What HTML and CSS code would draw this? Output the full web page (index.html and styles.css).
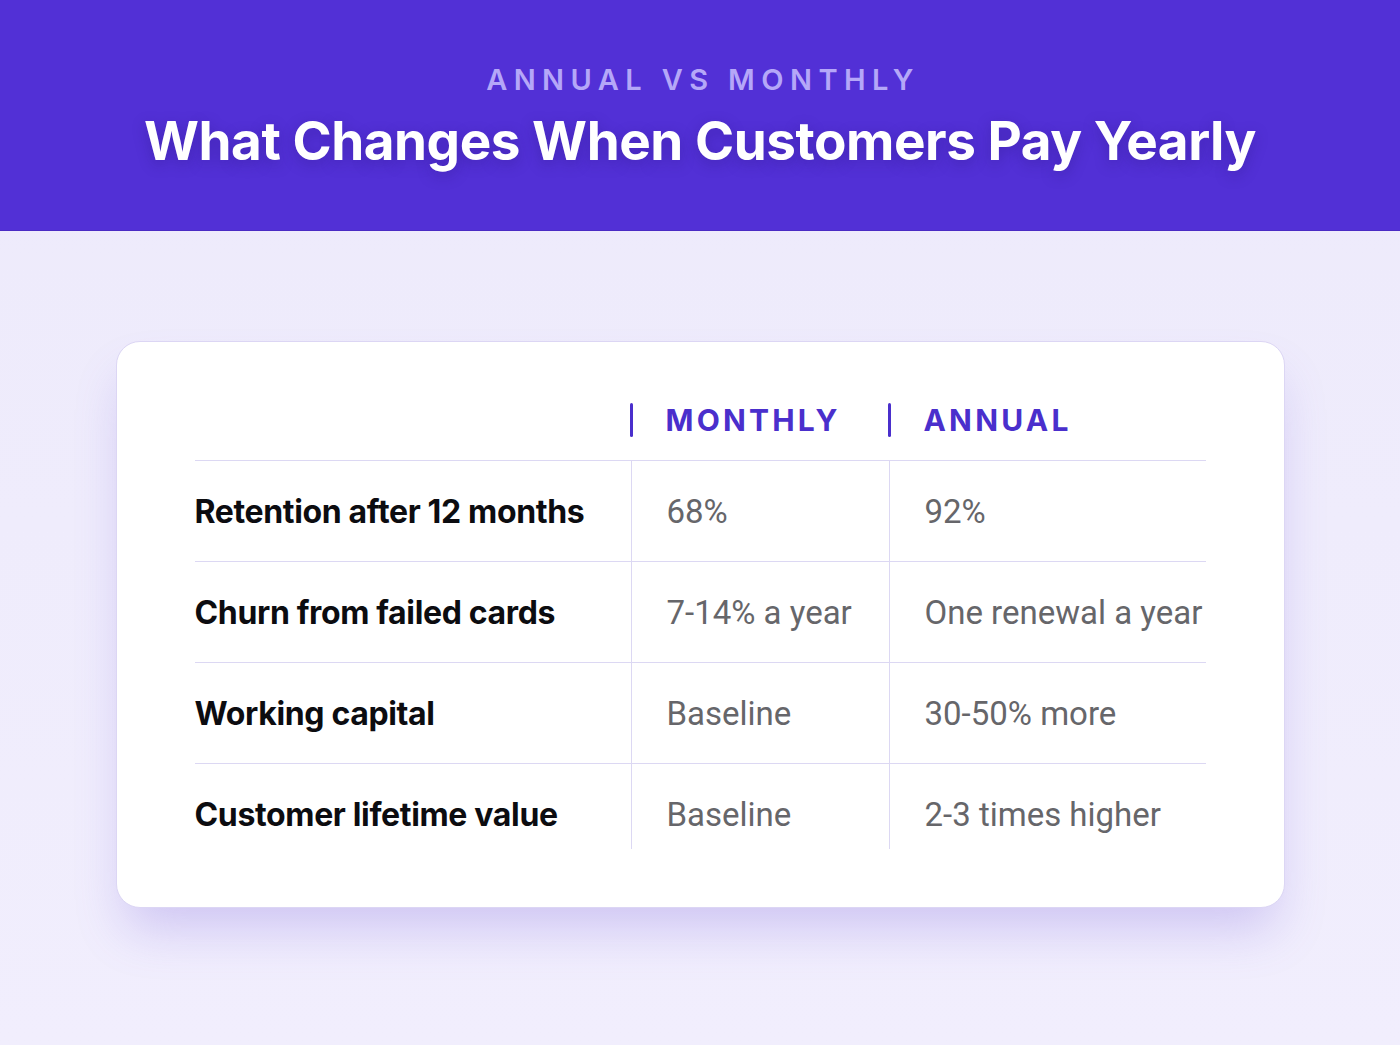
FILE: index.html
```html
<!DOCTYPE html>
<html lang="en">
<head>
<meta charset="utf-8">
<title>Annual vs Monthly</title>
<link rel="stylesheet" href="styles.css">
</head>
<body>
<header class="hero">
  <div class="eyebrow">ANNUAL VS MONTHLY</div>
  <h1 class="title">What Changes When Customers Pay Yearly</h1>
</header>
<main class="stage">
  <section class="card">
    <div class="table">
      <div class="row head">
        <div class="cell label"></div>
        <div class="cell col"><span class="mark"></span>MONTHLY</div>
        <div class="cell col"><span class="mark"></span>ANNUAL</div>
      </div>
      <div class="row">
        <div class="cell label">Retention after 12 months</div>
        <div class="cell val">68%</div>
        <div class="cell val">92%</div>
      </div>
      <div class="row">
        <div class="cell label">Churn from failed cards</div>
        <div class="cell val">7-14% a year</div>
        <div class="cell val">One renewal a year</div>
      </div>
      <div class="row">
        <div class="cell label">Working capital</div>
        <div class="cell val">Baseline</div>
        <div class="cell val">30-50% more</div>
      </div>
      <div class="row last">
        <div class="cell label">Customer lifetime value</div>
        <div class="cell val">Baseline</div>
        <div class="cell val">2-3 times higher</div>
      </div>
    </div>
  </section>
</main>
</body>
</html>
```
FILE: styles.css
```css
* { box-sizing: border-box; }
html, body { margin: 0; padding: 0; }
body {
  width: 1400px;
  height: 1045px;
  overflow: hidden;
  font-family: "Inter", "Roboto", "Liberation Sans", sans-serif;
  background: linear-gradient(180deg, #edeafb 0%, #f1eefd 100%);
}
.hero {
  height: 231px;
  background: #5230d6;
  border-bottom: 1px solid #4a2bc4;
  display: flex;
  flex-direction: column;
  align-items: center;
  padding-top: 62px;
}
.eyebrow {
  font-size: 29px;
  font-weight: 600;
  letter-spacing: 6.4px;
  color: #b5a7f8;
  line-height: 36px;
  padding-left: 6px;
}
.title {
  margin: 11px 0 0;
  font-size: 53px;
  font-weight: 700;
  color: #ffffff;
  line-height: 64px;
  letter-spacing: -0.45px;
  text-shadow: 0 4px 14px rgba(40, 20, 120, 0.35);
}
.stage {
  display: flex;
  justify-content: center;
  padding-top: 110px;
}
.card {
  width: 1169px;
  height: 567px;
  background: #ffffff;
  border: 1px solid #dcd6f4;
  border-radius: 24px;
  box-shadow: 0 30px 50px -10px rgba(120, 95, 220, 0.28);
  padding: 38px 0 0 78px;
}
.table {
  width: 1011px;
  display: flex;
  flex-direction: column;
}
.row {
  display: grid;
  grid-template-columns: 436px 258px 317px;
  height: 101px;
  border-bottom: 1px solid #dcd8f3;
}
.row.head { height: 81px; }
.row.last { border-bottom: none; height: 85px; }
.cell {
  display: flex;
  align-items: center;
  height: 100px;
  white-space: nowrap;
}
.row.head .cell { height: 80px; }
.row.last .cell { height: 85px; align-items: flex-start; padding-top: 31px; }
.label {
  font-size: 32px;
  font-weight: 700;
  color: #0c0c10;
  letter-spacing: -0.35px;
}
.val, .col { border-left: 1px solid #dcd8f3; padding-left: 35px; }
.row.head .col { border-left: none; position: relative; }
.mark {
  position: absolute;
  left: -1px;
  top: 23px;
  width: 3px;
  height: 34px;
  border-radius: 2px;
  background: #4a2fcc;
}
.col {
  font-size: 30px;
  font-weight: 700;
  color: #4a2fcc;
  letter-spacing: 3.2px;
}
.val {
  font-family: "Roboto", "Liberation Sans", sans-serif;
  font-size: 33px;
  font-weight: 400;
  color: #66666a;
}
```
